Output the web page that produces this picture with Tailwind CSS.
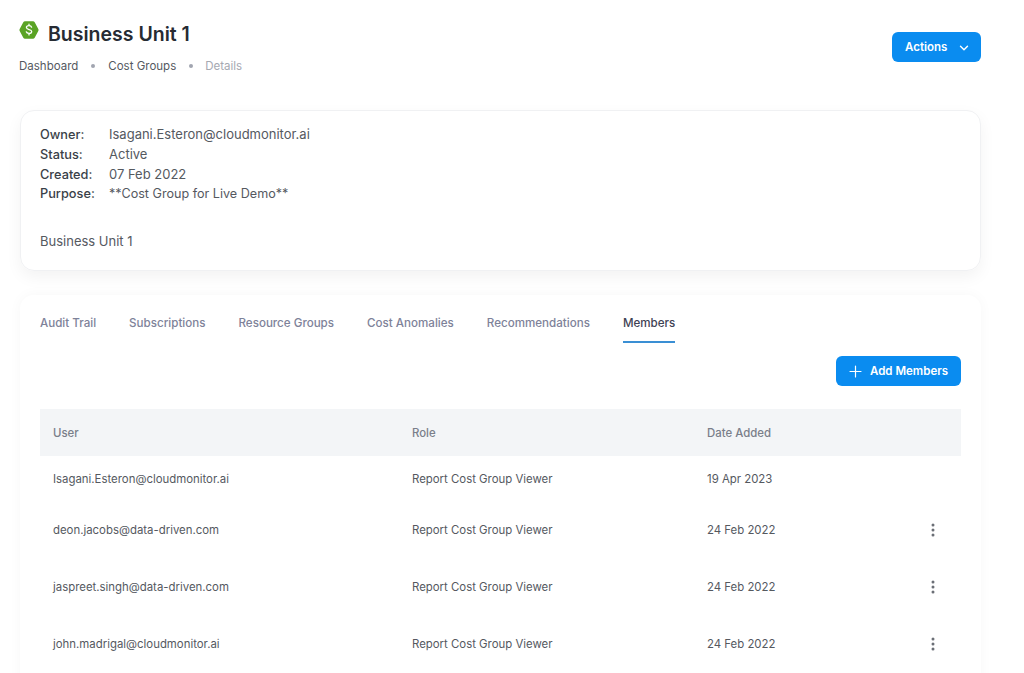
<!DOCTYPE html>
<html lang="en">
<head>
  <meta charset="utf-8">
  <title>Business Unit 1</title>
  <script src="https://cdn.jsdelivr.net/npm/@tailwindcss/browser@4"></script>
</head>
<body class="h-[673px] overflow-hidden bg-white font-['Inter',sans-serif] text-[#3f4254]">

  <!-- header -->
  <header class="flex items-start justify-between pl-[19px] pr-[43px] pt-[21px] h-[110px]">
    <div>
      <div class="flex items-center h-[26px]">
        <svg class="w-[20px] h-[20px] -mt-[8px]" viewBox="0 0 20 20">
          <path d="M6 1.2h8a2 2 0 0 1 1.7 1l3.6 6.8a2 2 0 0 1 0 2l-3.6 6.8a2 2 0 0 1-1.7 1H6a2 2 0 0 1-1.7-1L.7 11a2 2 0 0 1 0-2l3.6-6.8a2 2 0 0 1 1.7-1z" fill="#5aa324"/>
          <path d="M12.6 7.2c-.3-1-1.3-1.5-2.6-1.5-1.5 0-2.6.7-2.6 1.9 0 2.6 5.3 1.3 5.3 3.9 0 1.2-1.1 1.9-2.7 1.9-1.4 0-2.4-.6-2.7-1.6M10 4.2v1.5M10 13.4v1.5" fill="none" stroke="#fff" stroke-width="1.3" stroke-linecap="round"/>
        </svg>
        <h1 class="ml-[9px] text-[19.5px] leading-[26px] font-semibold text-[#262b33]">Business Unit 1</h1>
      </div>
      <nav class="flex items-center mt-[10px] text-[11.5px] leading-[18px] text-[#55595f]">
        <span>Dashboard</span>
        <span class="w-[4px] h-[4px] rounded-full bg-[#a1a5b0] mx-[13px]"></span>
        <span>Cost Groups</span>
        <span class="w-[4px] h-[4px] rounded-full bg-[#a1a5b0] ml-[13px] mr-[12px]"></span>
        <span class="text-[#a5a9b2]">Details</span>
      </nav>
    </div>
    <button class="flex items-center mt-[11px] h-[30px] w-[89px] pl-[13px] pt-[1px] rounded-[6px] bg-[#0a8cf0] text-white text-[11.5px] font-semibold">
      Actions
      <svg class="w-[10px] h-[10px] ml-[12px]" viewBox="0 0 10 10" fill="none" stroke="#fff" stroke-width="1.4" stroke-linecap="round" stroke-linejoin="round"><path d="M1.5 3.2 5 6.8l3.5-3.6"/></svg>
    </button>
  </header>

  <main class="pl-[20px] pr-[43px]">
    <!-- details card -->
    <section class="h-[161px] rounded-[14px] border border-[#f0f1f3] shadow-[0_6px_16px_rgba(0,0,0,0.05)] pl-[19px] pt-[13px] text-[13px] leading-[20px] text-[#55595f]">
      <dl class="grid grid-cols-[69px_1fr] auto-rows-[20px] items-baseline">
        <dt class="text-[12.75px] font-medium text-[#3a3f48]">Owner:</dt><dd>Isagani.Esteron@cloudmonitor.ai</dd>
        <dt class="text-[12.75px] font-medium text-[#3a3f48]">Status:</dt><dd>Active</dd>
        <dt class="text-[12.75px] font-medium text-[#3a3f48]">Created:</dt><dd>07 Feb 2022</dd>
        <dt class="text-[12.75px] font-medium text-[#3a3f48]">Purpose:</dt><dd class="text-[12.6px]">**Cost Group for Live Demo**</dd>
      </dl>
      <p class="mt-[27px]">Business Unit 1</p>
    </section>

    <!-- tabs card -->
    <section class="mt-[24px] h-[400px] rounded-[14px] shadow-[0_0_14px_rgba(0,0,0,0.035)] px-[20px]">
      <div class="flex gap-[33px] text-[11.6px] font-medium text-[#7e8299] pt-[19px]">
        <a class="h-[29px] leading-[18px]">Audit Trail</a>
        <a class="h-[29px] leading-[18px]">Subscriptions</a>
        <a class="h-[29px] leading-[18px]">Resource Groups</a>
        <a class="h-[29px] leading-[18px]">Cost Anomalies</a>
        <a class="h-[29px] leading-[18px]">Recommendations</a>
        <a class="h-[29px] leading-[18px] border-b-2 border-[#3a8fd4] text-[#3f4254]">Members</a>
      </div>
      <div class="flex justify-end mt-[13px]">
        <button class="flex items-center h-[30px] w-[125px] pl-[13px] pt-[1px] rounded-[6px] bg-[#0a8cf0] text-white text-[11.5px] font-semibold">
          <svg class="w-[13px] h-[13px] mr-[8px]" viewBox="0 0 13 13" fill="none" stroke="#fff" stroke-width="1.2" stroke-linecap="round"><path d="M6.5 1v11M1 6.5h11"/></svg>
          Add Members
        </button>
      </div>
      <table class="w-full mt-[23px] text-[11.4px] text-[#55595f] table-fixed">
        <thead>
          <tr class="h-[47px] bg-[#f3f5f7] text-left text-[#7a7f8a]">
            <th class="w-[372px] pl-[13px] pt-[2px] font-medium">User</th>
            <th class="w-[295px] pt-[2px] font-medium">Role</th>
            <th class="pt-[2px] font-medium">Date Added</th>
            <th class="w-[30px]"></th>
          </tr>
        </thead>
        <tbody>
          <tr class="h-[46px]"><td class="pl-[13px] pt-[1px]">Isagani.Esteron@cloudmonitor.ai</td><td class="pt-[1px]">Report Cost Group Viewer</td><td class="pt-[1px]">19 Apr 2023</td><td></td></tr>
          <tr class="h-[57px]"><td class="pl-[13px]">deon.jacobs@data-driven.com</td><td>Report Cost Group Viewer</td><td>24 Feb 2022</td><td class="align-middle">
            <svg class="w-[4px] h-[14px] -mt-[2px]" viewBox="0 0 4 14" fill="#6b6f76"><circle cx="2" cy="2" r="1.5"/><circle cx="2" cy="7" r="1.5"/><circle cx="2" cy="12" r="1.5"/></svg></td></tr>
          <tr class="h-[57px]"><td class="pl-[13px]">jaspreet.singh@data-driven.com</td><td>Report Cost Group Viewer</td><td>24 Feb 2022</td><td class="align-middle">
            <svg class="w-[4px] h-[14px] -mt-[2px]" viewBox="0 0 4 14" fill="#6b6f76"><circle cx="2" cy="2" r="1.5"/><circle cx="2" cy="7" r="1.5"/><circle cx="2" cy="12" r="1.5"/></svg></td></tr>
          <tr class="h-[57px]"><td class="pl-[13px]">john.madrigal@cloudmonitor.ai</td><td>Report Cost Group Viewer</td><td>24 Feb 2022</td><td class="align-middle">
            <svg class="w-[4px] h-[14px] -mt-[2px]" viewBox="0 0 4 14" fill="#6b6f76"><circle cx="2" cy="2" r="1.5"/><circle cx="2" cy="7" r="1.5"/><circle cx="2" cy="12" r="1.5"/></svg></td></tr>
        </tbody>
      </table>
    </section>
  </main>
</body>
</html>
